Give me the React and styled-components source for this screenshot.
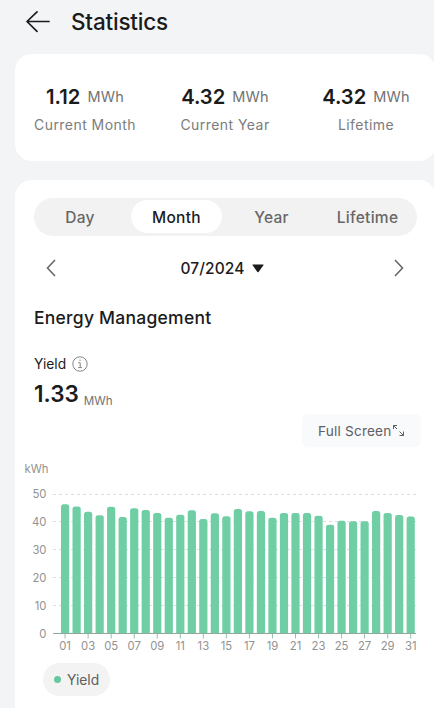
import { useState } from 'react';
import styled, { createGlobalStyle, css } from 'styled-components';

const GlobalStyle = createGlobalStyle`
  * {
    box-sizing: border-box;
  }

  body {
    margin: 0;
    background: #f2f4f6;
    font-family: Inter, 'Liberation Sans', sans-serif;
    color: #1b1b1b;
    overflow: hidden;
  }
`;

const flexRow = css`
  display: flex;
  align-items: center;
`;

const Screen = styled.div`
  width: 434px;
  height: 708px;
  padding-left: 15px;
  overflow: hidden;
`;

const Header = styled.header`
  ${flexRow}
  height: 54px;
  padding: 0 0 11px 11px;
  gap: 21px;
`;

const Title = styled.h1`
  margin: 0;
  font-size: 22.5px;
  line-height: 28px;
  font-weight: 500;
  letter-spacing: -0.2px;
`;

const Card = styled.section`
  width: 421px;
  background: #fff;
  border-radius: 17px;
`;

const SummaryCard = styled(Card)`
  display: flex;
  height: 107px;
  padding: 31px 0 0 1px;
`;

const SummaryItem = styled.div`
  width: ${({ $width }) => $width}px;
  text-align: center;
`;

const SummaryValue = styled.div`
  display: flex;
  justify-content: center;
  gap: 7px;
  height: 29px;
  font-size: 20.2px;
  line-height: 24px;
  font-weight: 600;
`;

const Unit = styled.span`
  font-size: ${({ $size }) => $size || 14.5}px;
  font-weight: 400;
  letter-spacing: ${({ $size }) => ($size ? 0 : 0.2)}px;
  color: #727272;
`;

const SummaryLabel = styled.div`
  font-size: 14px;
  line-height: 22px;
  letter-spacing: 0.45px;
  color: #7c7c7c;
`;

const DetailCard = styled(Card)`
  height: 560px;
  margin-top: 19px;
  padding-top: 18px;
`;

const Tabs = styled.div`
  display: grid;
  grid-template-columns: 94px 95px 95px 97px;
  width: 383px;
  height: 38px;
  margin-left: 19px;
  padding: 2px 1px 2px 0;
  border-radius: 19px;
  background: #f2f2f2;
`;

const Tab = styled.button`
  height: 33px;
  margin: 0 1px 0 3px;
  padding: 2px 0 0;
  border: 0;
  border-radius: 17px;
  background: ${({ $active }) => ($active ? '#fff' : 'transparent')};
  color: ${({ $active }) => ($active ? '#1b1b1b' : '#676767')};
  font: 500 15.5px/31px Inter, sans-serif;
  letter-spacing: 0.3px;

  &:first-child {
    margin: 0 2px 0 0;
  }
`;

const DateRow = styled.div`
  ${flexRow}
  justify-content: space-between;
  height: 64px;
  padding: 0 32px 0 31px;
`;

const DateValue = styled.div`
  ${flexRow}
  gap: 7px;
  margin-right: 6px;
  font-size: 15.5px;
  font-weight: 500;
  letter-spacing: 0.1px;
`;

const SectionTitle = styled.h2`
  margin: 6px 0 0 19px;
  font-size: 17.5px;
  line-height: 24px;
  font-weight: 500;
  letter-spacing: 0.25px;
`;

const YieldLabel = styled.div`
  ${flexRow}
  height: 20px;
  margin: 24px 0 0 19px;
  gap: 6px;
  font-size: 13.8px;
`;

const YieldValue = styled.div`
  display: flex;
  height: 34px;
  margin: 6px 0 0 19px;
  gap: 5px;
  font-size: 22.5px;
  line-height: 28px;
  font-weight: 600;

  ${Unit} {
    padding-top: 7px;
  }
`;

const FullScreen = styled.button`
  ${flexRow}
  width: 119px;
  height: 33px;
  margin-left: 287px;
  padding: 0 0 0 16px;
  gap: 1px;
  border: 0;
  border-radius: 6px;
  background: #f9fafc;
  color: #5e6063;
  font: 400 13.6px Inter, sans-serif;
  letter-spacing: 0.2px;
`;

const Chart = styled.svg`
  display: block;
  margin-top: 8px;

  text {
    font-size: 11.3px;
    fill: #929292;
  }
`;

const Legend = styled.div`
  ${flexRow}
  width: 67px;
  height: 33px;
  margin: 8px 0 0 28px;
  padding-left: 11px;
  gap: 6px;
  border-radius: 17px;
  background: #f3f3f3;
  color: #5e5e5e;
  font-size: 13.8px;
`;

const Dot = styled.span`
  width: 7px;
  height: 7px;
  border-radius: 50%;
  background: #65c99d;
`;

const summary = [
  { value: '1.12', label: 'Current Month', width: 139 },
  { value: '4.32', label: 'Current Year', width: 143 },
  { value: '4.32', label: 'Lifetime', width: 141 },
];

const tabs = ['Day', 'Month', 'Year', 'Lifetime'];

const yields = [
  46.3, 45.5, 43.6, 42.4, 45.4, 41.8, 44.9, 44.3, 43.2, 41.5, 42.6, 44.2, 41, 43.1, 42, 44.6, 43.8, 43.9, 41.5, 43.2, 43.2, 43.2,
  42.2, 39, 40.4, 40.2, 40.2, 43.9, 43.2, 42.5, 41.9,
];

const BackIcon = () => (
  <svg width="24" height="22" viewBox="0 0 24 22" fill="none" stroke="#1b1b1b" strokeWidth="1.7" strokeLinecap="round" strokeLinejoin="round">
    <path d="M23 10.5H1M11 .9 1 10.5l10 9.8" />
  </svg>
);

const Chevron = ({ d }) => (
  <svg width="10" height="18" viewBox="0 0 10 18" fill="none" stroke="#676767" strokeWidth="1.6">
    <path d={d} />
  </svg>
);

const InfoIcon = () => (
  <svg width="16" height="16" viewBox="0 0 16 16" fill="none" stroke="#858585">
    <circle cx="8" cy="8" r="7.2" />
    <path d="M6.3 6.7H8.2V11.5M6.1 11.6H10" />
    <circle cx="8" cy="4.2" r=".7" fill="#858585" stroke="none" />
  </svg>
);

const ExpandIcon = () => (
  <svg width="13" height="13" viewBox="0 0 13 13" fill="none" stroke="#5e6063" strokeWidth="1">
    <path d="M1.5 5V1.5H5M1.5 1.5 5 5M11.5 7.5v4H7.5M11.5 11.5 7.5 7.5" />
  </svg>
);

const BASE = 178.5;
const STEP = 27.9;
const PITCH = 11.52;

const YieldChart = () => (
  <Chart width="419" height="200" viewBox="0 0 419 200">
    <text x="9.5" y="17.5">
      kWh
    </text>
    {[50, 40, 30, 20, 10, 0].map((tick) => {
      const y = BASE - (tick / 10) * STEP;
      return (
        <g key={tick}>
          <text x="31.5" y={y + 4.3} textAnchor="end">
            {tick}
          </text>
          {tick > 0 && <path d={`M38 ${Math.floor(y) + 0.5}H401`} stroke="#dcdedf" strokeDasharray="3 3" />}
        </g>
      );
    })}
    {yields.map((value, i) => {
      const x = 50.1 + i * PITCH;
      const top = BASE - (value / 10) * STEP;
      return (
        <g key={i}>
          <path d={`M${x - 4.1} ${BASE}V${top + 2.5}q0-2.5 2.5-2.5h3.2q2.5 0 2.5 2.5V${BASE}z`} fill="#6fcea4" />
          {i % 2 === 0 && (
            <>
              <path d={`M${x} ${BASE}v5`} stroke="#9bbdae" />
              <text x={x} y="194.5" textAnchor="middle">
                {String(i + 1).padStart(2, '0')}
              </text>
            </>
          )}
        </g>
      );
    })}
    <path d={`M38 ${BASE}H401`} stroke="#90a89d" />
  </Chart>
);

const App = () => {
  const [active, setActive] = useState('Month');

  return (
    <Screen>
      <GlobalStyle />
      <Header>
        <BackIcon />
        <Title>Statistics</Title>
      </Header>
      <SummaryCard>
        {summary.map(({ value, label, width }) => (
          <SummaryItem key={label} $width={width}>
            <SummaryValue>
              {value}
              <Unit>MWh</Unit>
            </SummaryValue>
            <SummaryLabel>{label}</SummaryLabel>
          </SummaryItem>
        ))}
      </SummaryCard>
      <DetailCard>
        <Tabs>
          {tabs.map((tab) => (
            <Tab key={tab} $active={tab === active} onClick={() => setActive(tab)}>
              {tab}
            </Tab>
          ))}
        </Tabs>
        <DateRow>
          <Chevron d="M9 1 1.5 9 9 17" />
          <DateValue>
            07/2024
            <svg width="12" height="9" viewBox="0 0 12 9">
              <path d="M1 .5h10q1 0 .4.8L6.6 8q-.6.7-1.2 0L.6 1.3Q0 .5 1 .5z" fill="#1b1b1b" />
            </svg>
          </DateValue>
          <Chevron d="M1 1 8.5 9 1 17" />
        </DateRow>
        <SectionTitle>Energy Management</SectionTitle>
        <YieldLabel>
          Yield
          <InfoIcon />
        </YieldLabel>
        <YieldValue>
          1.33
          <Unit $size={11.6}>MWh</Unit>
        </YieldValue>
        <FullScreen>
          Full Screen
          <ExpandIcon />
        </FullScreen>
        <YieldChart />
        <Legend>
          <Dot />
          Yield
        </Legend>
      </DetailCard>
    </Screen>
  );
};

export default App;
